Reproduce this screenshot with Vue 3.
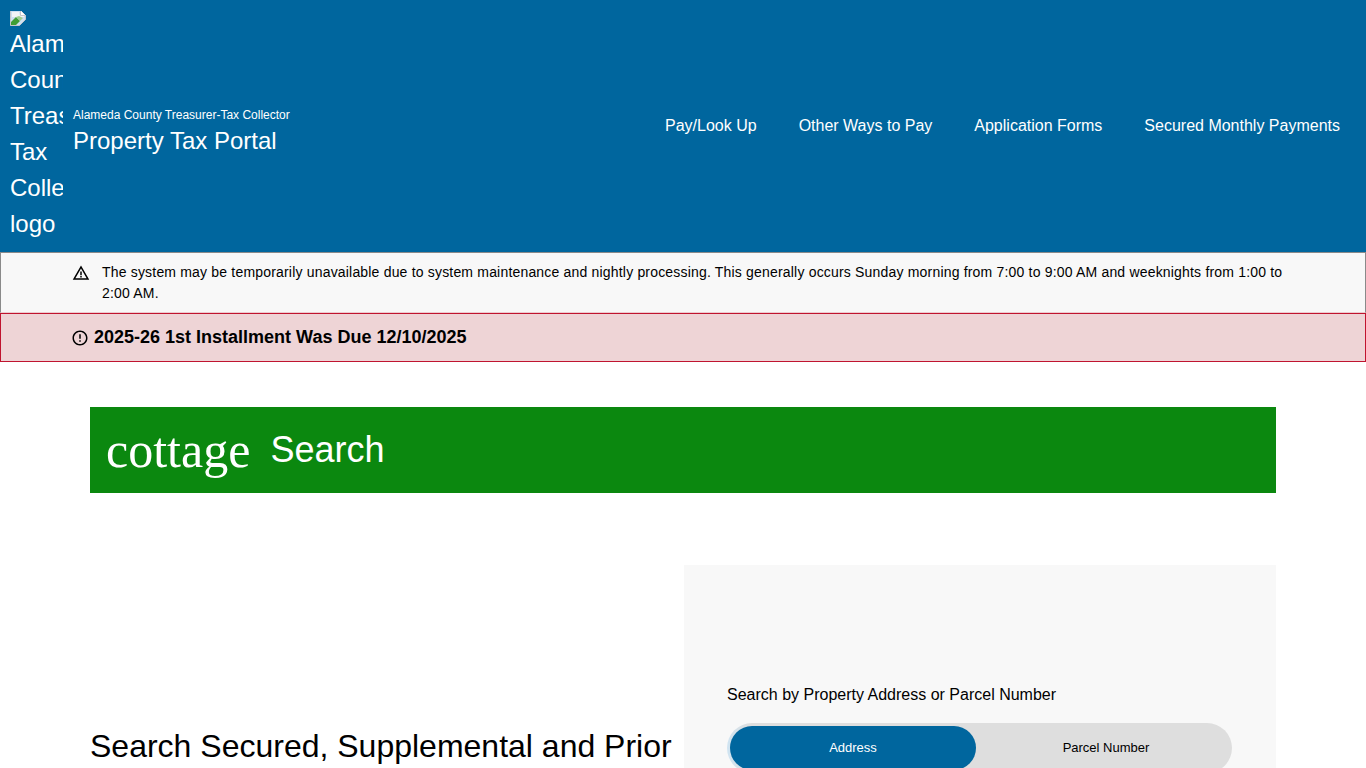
<script setup>
const navItems = ['Pay/Look Up', 'Other Ways to Pay', 'Application Forms', 'Secured Monthly Payments']
</script>

<template>
  <div class="page">
    <header class="header">
      <div class="brand">
        <div class="logo">
          <svg class="broken" width="16" height="16" viewBox="0 0 16 16">
            <path d="M.5.5h10l5 5v4l-6 6H.5z" fill="#cfe0f2" stroke="#c4c8cc" />
            <path d="M2 2h7l1 4h4v1H2z" fill="#f2f4f6" />
            <path d="M1 15v-3l5-5 4 4-4 4z" fill="#3f9e35" />
            <path d="M6 7l3-1 4 2-3 3z" fill="#9ed08f" />
            <path d="M10.5.5v5h5" fill="#fff" stroke="#c4c8cc" />
          </svg>
          <span class="logo-alt">Alameda County Treasurer-Tax Collector logo</span>
        </div>
        <div class="titles">
          <div class="org">Alameda County Treasurer-Tax Collector</div>
          <div class="portal">Property Tax Portal</div>
        </div>
      </div>
      <nav class="nav">
        <a v-for="item in navItems" :key="item" class="nav-link">{{ item }}</a>
      </nav>
    </header>

    <section class="notice notice-info">
      <svg class="warn" width="18" height="18" viewBox="0 0 24 24">
        <path d="M1 21h22L12 2 1 21zm3.47-2L12 5.99 19.53 19H4.47z" fill="#000" />
        <path d="M11 16h2v2h-2zM11 10h2v5h-2z" fill="#000" />
      </svg>
      <p class="notice-text">The system may be temporarily unavailable due to system maintenance and nightly processing. This generally occurs Sunday morning from 7:00 to 9:00 AM and weeknights from 1:00 to 2:00 AM.</p>
    </section>

    <section class="notice notice-alert">
      <svg class="alert-icon" width="18" height="18" viewBox="0 0 24 24">
        <path d="M11 15h2v2h-2zm0-8h2v6h-2zm1-5C6.47 2 2 6.48 2 12s4.47 10 10 10 10-4.48 10-10S17.53 2 12 2zm0 18c-4.42 0-8-3.58-8-8s3.58-8 8-8 8 3.58 8 8-3.58 8-8 8z" fill="#000" />
      </svg>
      <strong class="alert-text">2025-26 1st Installment Was Due 12/10/2025</strong>
    </section>

    <main class="main">
      <div class="banner">
        <span class="banner-icon">cottage</span>
        <h1 class="banner-title">Search</h1>
      </div>

      <div class="columns">
        <div class="col-left">
          <h2 class="lead">Search Secured, Supplemental and Prior</h2>
        </div>
        <div class="col-right">
          <label class="search-label">Search by Property Address or Parcel Number</label>
          <div class="toggle">
            <button class="toggle-btn active">Address</button>
            <button class="toggle-btn rest">Parcel Number</button>
          </div>
        </div>
      </div>
    </main>
  </div>
</template>

<style scoped>
.page {
  height: 768px;
  overflow: hidden;
  font-family: "Liberation Sans", Arial, sans-serif;
  color: #000;
  background: #fff;
}
.header {
  height: 252px;
  background: #00669e;
  color: #fff;
  display: flex;
  align-items: center;
  justify-content: space-between;
  padding: 0 5px 0 10px;
  box-sizing: border-box;
}
.brand {
  display: flex;
  align-items: center;
}
.logo {
  width: 53px;
  overflow: hidden;
  font-size: 24px;
  line-height: 36px;
  margin-right: 10px;
}
.broken {
  display: block;
  margin-top: -1px;
}
.logo-alt {
  display: block;
}
.titles {
  padding-top: 12px;
}
.org {
  font-size: 12px;
  line-height: 18px;
}
.portal {
  font-size: 24px;
  line-height: 34px;
}
.nav {
  display: flex;
  margin-top: -1px;
}
.nav-link {
  font-size: 16px;
  line-height: 24px;
  padding: 0 21px;
  white-space: nowrap;
}
.notice {
  display: flex;
  box-sizing: border-box;
  padding-left: 71px;
}
.notice-info {
  height: 61px;
  background: #f8f8f8;
  border: 1px solid #8a8a8a;
  border-bottom-color: #ecccd0;
  padding-top: 9px;
  padding-right: 71px;
}
.warn {
  flex: none;
  margin-top: 2px;
  margin-right: 12px;
}
.notice-text {
  margin: 0;
  font-size: 14px;
  line-height: 21px;
  letter-spacing: 0.185px;
}
.notice-alert {
  height: 49px;
  background: #eed4d6;
  border: 1px solid #c0142f;
  align-items: center;
}
.alert-icon {
  flex: none;
  margin-left: -1px;
  margin-right: 5px;
  margin-top: 1px;
}
.alert-text {
  font-size: 18px;
  line-height: 27px;
}
.main {
  padding: 45px 90px 0;
}
.banner {
  height: 86px;
  background: #0b880f;
  color: #fff;
  display: flex;
  align-items: center;
  padding-left: 16px;
}
.banner-icon {
  font-family: "Liberation Serif", "Times New Roman", serif;
  font-size: 50px;
  line-height: 48px;
  margin-right: 20px;
}
.banner-title {
  margin: 0;
  font-size: 36px;
  line-height: 44px;
  font-weight: 400;
}
.columns {
  display: flex;
  margin-top: 72px;
}
.col-left {
  width: 594px;
  flex: none;
  padding-top: 161px;
}
.lead {
  margin: 0;
  font-size: 32px;
  line-height: 40px;
  font-weight: 400;
  white-space: nowrap;
}
.col-right {
  flex: 1;
  background: #f8f8f8;
  padding: 120px 44px 40px 43px;
}
.search-label {
  display: block;
  font-size: 16px;
  line-height: 20px;
  margin-bottom: 18px;
}
.toggle {
  width: 505px;
  height: 50px;
  border-radius: 25px;
  background: linear-gradient(to right, #cfe4f2 0, #dedede 22px);
  display: flex;
  padding: 3px;
  box-sizing: border-box;
}
.toggle-btn {
  border: 0;
  background: transparent;
  font-family: inherit;
  font-size: 13px;
  color: #000;
  border-radius: 22px;
  padding: 0 0 2px;
}
.toggle-btn.active {
  width: 246px;
  flex: none;
  background: #00669e;
  color: #fff;
}
.toggle-btn.rest {
  flex: 1;
  padding-left: 7px;
}
</style>
